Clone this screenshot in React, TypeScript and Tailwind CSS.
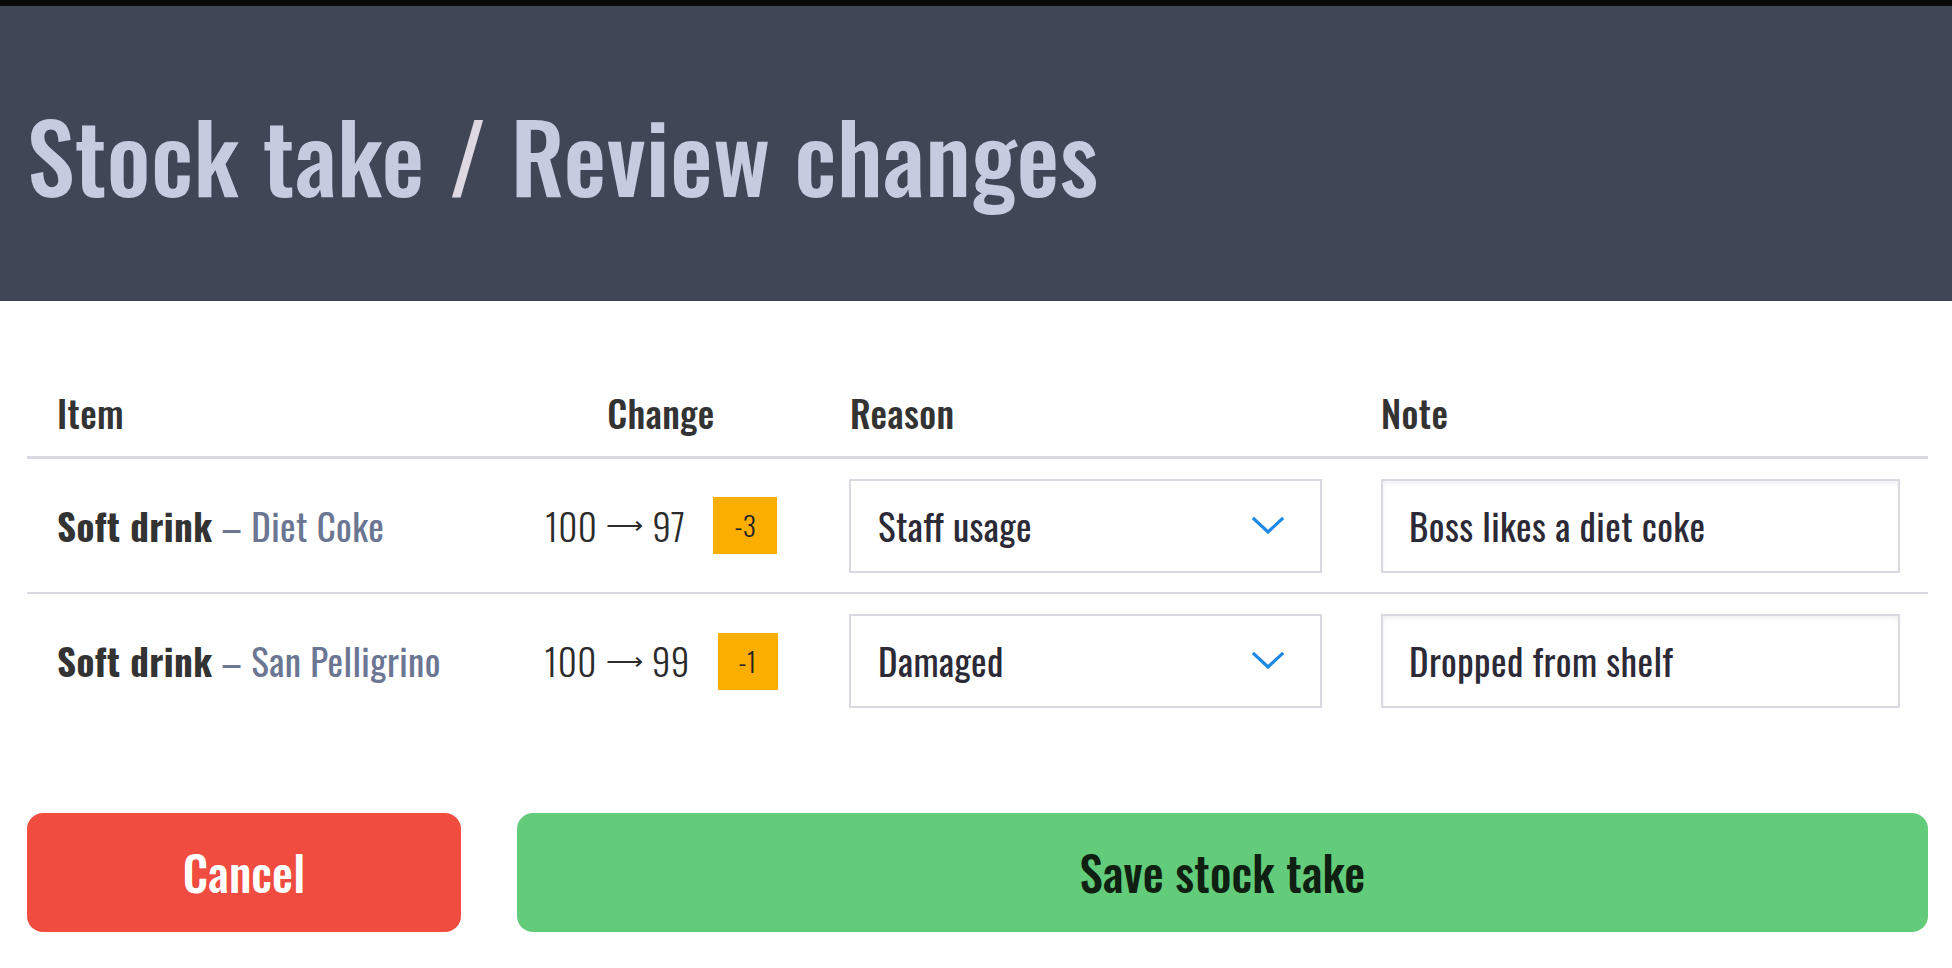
type Row = {
  category: string
  name: string
  from: number
  to: number
  reason: string
  note: string
}

const rows: Row[] = [
  { category: "Soft drink", name: "Diet Coke", from: 100, to: 97, reason: "Staff usage", note: "Boss likes a diet coke" },
  { category: "Soft drink", name: "San Pelligrino", from: 100, to: 99, reason: "Damaged", note: "Dropped from shelf" },
]

const Chevron = () => (
  <svg width="32" height="20" viewBox="0 0 32 20" fill="none" className="shrink-0">
    <path d="M2 3 L16 16 L30 3" stroke="#1e88e5" strokeWidth="3.2" strokeLinecap="square" />
  </svg>
)

export default function App() {
  return (
    <div className="min-h-[968px] bg-white font-['Oswald',sans-serif] tracking-wide">
      <div className="h-[6px] bg-[#0a0a0a]" />
      <header className="flex h-[295px] items-center bg-[#404655] px-[27px]">
        <h1 className="text-[96px] font-medium leading-none tracking-[0.004em] text-[#c6cbe0]">
          Stock take <span className="text-[#ddd8e2]">/</span> Review changes
        </h1>
      </header>

      <main className="pl-[27px] pr-[24px] pt-[69px]">
        <div className="grid h-[89px] grid-cols-[494px_280px_580px_1fr] items-center border-b-[3px] border-[#dcd8e2] pr-[28px] text-[37px] font-medium text-[#333333]">
          <div className="pl-[30px]">Item</div>
          <div className="text-center">Change</div>
          <div className="pl-[49px]">Reason</div>
          <div>Note</div>
        </div>

        {rows.map((row, index) => (
          <div
            key={row.name}
            className={
              index === 0
                ? "grid h-[135px] grid-cols-[494px_280px_580px_1fr] items-center border-b-2 border-[#dcd8e2] pr-[28px] text-[37px]"
                : "grid h-[134px] grid-cols-[494px_280px_580px_1fr] items-center pr-[28px] text-[37px]"
            }
          >
            <div className="pl-[30px] whitespace-nowrap">
              <span className="font-bold text-[#333333]">{row.category}</span>
              <span className="font-normal text-[#6b7693]"> – {row.name}</span>
            </div>
            <div className="flex items-center justify-center gap-[28px]">
              <span className="flex items-center font-light text-[#2b2b2b]">
                {row.from}
                <span className="mx-[9px] font-['DejaVu_Sans',sans-serif] text-[26px] font-light tracking-normal">⟶</span>
                {row.to}
              </span>
              <span className="flex h-[57px] items-center justify-center bg-[#fcae00] px-[21px] text-[27px] font-light text-[#222222]">
                {row.to - row.from}
              </span>
            </div>
            <div className="pl-[48px]">
              <div className="flex h-[94px] w-[473px] items-center justify-between border-2 border-[#dcd8e2] pl-[27px] pr-[36px] text-[#2b2a36]">
                <span>{row.reason}</span>
                <Chevron />
              </div>
            </div>
            <div className="flex h-[94px] items-center border-2 border-[#dcd8e2] pl-[26px] text-[#2b2a36] shadow-[inset_0_3px_4px_rgba(0,0,0,0.06)]">
              {row.note}
            </div>
          </div>
        ))}

        <div className="mt-[85px] flex gap-[56px] tracking-[0.01em]">
          <button className="flex h-[119px] w-[434px] items-center justify-center rounded-[16px] bg-[#f04c3f] text-[47px] font-medium text-white">
            Cancel
          </button>
          <button className="flex h-[119px] flex-1 items-center justify-center rounded-[16px] bg-[#62cc7a] text-[47px] font-medium text-[#0f1f12]">
            Save stock take
          </button>
        </div>
      </main>
    </div>
  )
}
